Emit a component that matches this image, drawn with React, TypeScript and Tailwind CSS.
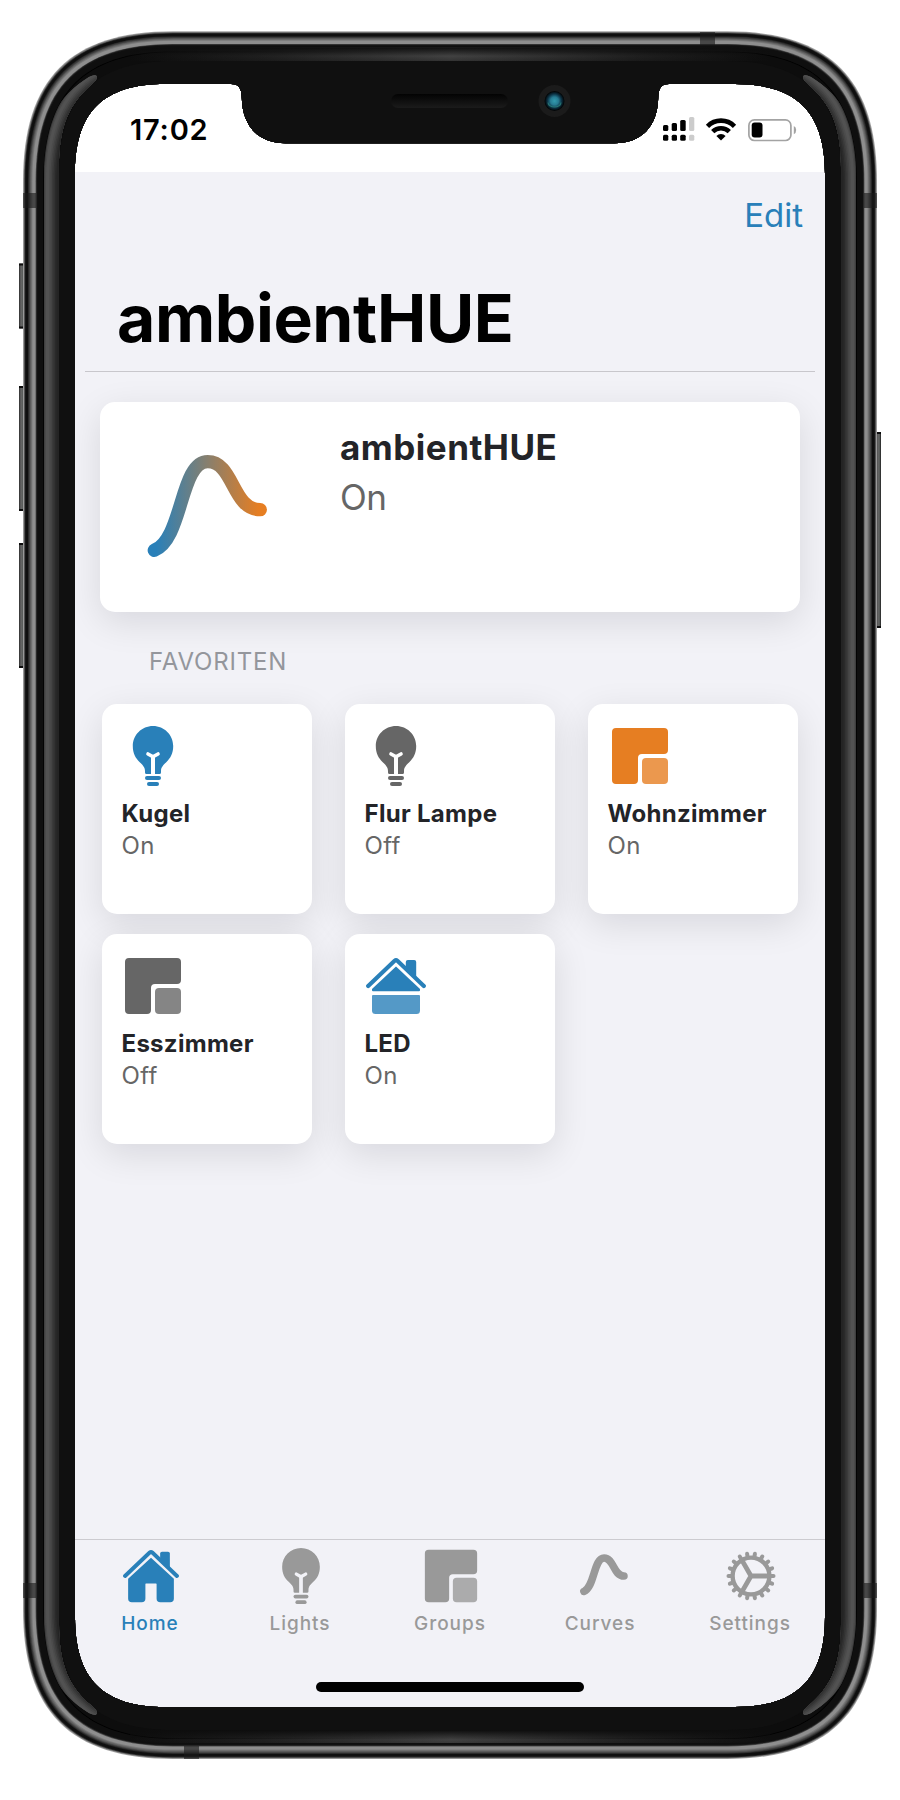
import type { ReactNode } from "react";

function corner(inset: number, l: number, t: number, r: number, b: number, R: number, k: number) {
  const x0 = l + inset, y0 = t + inset, x1 = r - inset, y1 = b - inset;
  const q = R - inset;
  const c = q * (1 - k);
  return `M${x0} ${y0 + q}C${x0} ${y0 + c} ${x0 + c} ${y0} ${x0 + q} ${y0}H${x1 - q}C${x1 - c} ${y0} ${x1} ${y0 + c} ${x1} ${y0 + q}V${y1 - q}C${x1} ${y1 - c} ${x1 - c} ${y1} ${x1 - q} ${y1}H${x0 + q}C${x0 + c} ${y1} ${x0} ${y1 - c} ${x0} ${y1 - q}Z`;
}

const body = (inset: number) => corner(inset, 23, 31.3, 877, 1759, 150, 0.684);

const SCREEN =
  "M75 174C75 112 103 84 165 84H231C239 84 241.5 88 241.8 98C242.5 126 258 143.3 286 143.3H614C642 143.3 657.5 126 658.2 98C658.5 88 661 84 669 84H735C797 84 825 112 825 174V1617C825 1679 797 1707 735 1707H165C103 1707 75 1679 75 1617Z";

const METAL: [number, string][] = [
  [0, "#a4a4a4"], [0.8, "#6e6e6e"], [1.6, "#2a2a2a"], [2.4, "#0f0f0f"], [5, "#262626"],
  [5.8, "#3a3a3a"], [6.6, "#505050"], [7.4, "#636363"], [8.4, "#787878"], [9.4, "#8e8e8e"],
  [12.6, "#4a4a4a"], [13.3, "#1a1a1a"], [14.2, "#0f0f0f"], [20.2, "#000000"],
];

const SHEEN: [number, string][] = [
  [20.6, "#383838"], [21.6, "#4a4a4a"], [23, "#525252"], [26, "#4c4c4c"], [27.5, "#444444"],
  [29, "#3b3b3b"], [30.5, "#323232"], [32, "#2a2a2a"], [33.5, "#242424"], [36, "#101010"],
];

const STRIP = "M44 160C44 122 58 96 89 77Q96 73.500 97 77Q97 80 92 84C69 104 59 126 59 168V1623C59 1665 69 1687 92 1706Q97 1710 97 1713Q96 1716.500 89 1713C58 1694 44 1668 44 1630Z";

const BUTTONS: [number, number, number][] = [
  [19, 263.5, 65], [19, 386, 125], [19, 543, 125], [876, 432, 196],
];

function PhoneFrame() {
  return (
    <svg className="pointer-events-none absolute inset-0" width="900" height="1800" viewBox="0 0 900 1800">
      <defs>
        <clipPath id="frame">
          <path clipRule="evenodd" d={`M0 0H900V1800H0Z${SCREEN}`} />
        </clipPath>
        <clipPath id="inner">
          <path d={body(16)} />
        </clipPath>
        <clipPath id="strip">
          <path d={STRIP} />
          <path d={STRIP} transform="translate(900 0) scale(-1 1)" />
        </clipPath>
        <linearGradient id="glow" x1="0" x2="1">
          <stop offset="0" stopColor="#454545" stopOpacity="0" />
          <stop offset="0.2" stopColor="#454545" stopOpacity="0.35" />
          <stop offset="0.5" stopColor="#484848" />
          <stop offset="0.8" stopColor="#454545" stopOpacity="0.35" />
          <stop offset="1" stopColor="#454545" stopOpacity="0" />
        </linearGradient>
        <linearGradient id="dim" x1="0" x2="0" y1="0" y2="1">
          <stop offset="0" stopColor="#0d0d0d" />
          <stop offset="0.65" stopColor="#0d0d0d" stopOpacity="0.1" />
          <stop offset="1" stopColor="#0d0d0d" stopOpacity="0.35" />
        </linearGradient>
        <linearGradient id="button" x1="0" x2="1">
          <stop offset="0" stopColor="#2b2b2b" />
          <stop offset="0.4" stopColor="#686868" />
          <stop offset="0.7" stopColor="#5a5d5b" />
          <stop offset="1" stopColor="#1f1f1f" />
        </linearGradient>
        <linearGradient id="speaker" x1="0" x2="0" y1="0" y2="1">
          <stop offset="0" stopColor="#030303" />
          <stop offset="1" stopColor="#1b1b1b" />
        </linearGradient>
        <radialGradient id="lens">
          <stop offset="0" stopColor="#329bae" />
          <stop offset="0.4" stopColor="#267b92" />
          <stop offset="0.7" stopColor="#0c3346" />
          <stop offset="0.95" stopColor="#020608" />
        </radialGradient>
      </defs>
      {BUTTONS.map(([x, y, h]) => (
        <g key={y}>
          <rect x={x} y={y} width="5" height={h} rx="1" fill="url(#button)" />
          <path d={`M${x} ${y + 1}h5M${x} ${y + h - 1}h5`} stroke="#0c0c0c" strokeWidth="2" />
        </g>
      ))}
      <g clipPath="url(#frame)">
        {METAL.map(([i, c]) => (
          <path key={i} d={body(i)} fill={c} />
        ))}
        <path d={body(21)} fill="#0d0d0d" />
        <g clipPath="url(#inner)">
          <rect x="130" y="47" width="640" height="14" fill="url(#glow)" />
          <rect x="130" y="47" width="640" height="14" fill="url(#dim)" />
          <rect x="130" y="1730" width="640" height="15" fill="url(#glow)" />
          <rect x="130" y="1730" width="640" height="15" fill="url(#dim)" />
        </g>
        <path d={corner(0, 59, 61, 841, 1730, 114, 0.684)} fill="#101010" />
        <g clipPath="url(#strip)">
          {SHEEN.map(([i, c]) => (
            <path key={i} d={body(i)} fill={c} />
          ))}
        </g>
        <path
          d="M23 193h13v15H23zM864 193h13v15h-13zM23 1583h13v15H23zM864 1583h13v15h-13zM700 32h15v13h-15zM184 1746h15v13h-15z"
          fill="#1c1c1c"
          fillOpacity="0.62"
        />
        <rect x="391" y="94" width="117" height="14" rx="7" fill="url(#speaker)" />
        <circle cx="554.5" cy="101" r="16" fill="#1b1b1b" />
        <circle cx="554.5" cy="101" r="10" fill="url(#lens)" />
        <path d="M548 102.500a6.500 4.500 0 0 0 13 0" fill="none" stroke="#39a58f" strokeOpacity="0.5" strokeWidth="1.200" />
      </g>
    </svg>
  );
}

type IconProps = { className: string };

function Bulb({ className }: IconProps) {
  return (
    <svg className={className} viewBox="0 0 60 60">
      <mask id="filament">
        <rect width="60" height="60" fill="#fff" />
        <path d="M25 28l5 2.800 5-2.800" fill="none" stroke="#000" strokeWidth="3.600" strokeLinecap="round" strokeLinejoin="round" />
        <path d="M30 30V49" stroke="#000" strokeWidth="4" />
      </mask>
      <path
        mask="url(#filament)"
        fill="currentColor"
        d="M30 0C41.300 0 50.200 9 50.200 20C50.200 27.500 47.500 32 43.500 36C40.500 39 38 41 38 45V46.500Q38 48 36.500 48H23.500Q22 48 22 46.500V45C22 41 19.500 39 16.500 36C12.500 32 9.800 27.500 9.800 20C9.800 9 18.700 0 30 0Z"
      />
      <rect x="22" y="50" width="16" height="4" rx="2" fill="currentColor" />
      <rect x="24" y="56" width="12" height="4" rx="2" fill="currentColor" />
    </svg>
  );
}

function Room({ className }: IconProps) {
  return (
    <svg className={className} viewBox="0 0 60 60" fill="currentColor">
      <path d="M6 2H54a4 4 0 0 1 4 4V24a4 4 0 0 1-4 4H32a4 4 0 0 0-4 4V54a4 4 0 0 1-4 4H6a4 4 0 0 1-4-4V6a4 4 0 0 1 4-4Z" />
      <rect x="32" y="32" width="26" height="26" rx="4" fillOpacity="0.8" />
    </svg>
  );
}

function Roof() {
  return (
    <>
      <path d="M2.200 30L28.600 4.800Q30 3.600 31.400 4.800L57.800 30" fill="none" stroke="currentColor" strokeWidth="4.200" strokeLinecap="round" />
      <path d="M39.800 12V6q0-2 2-2h6.400q2 0 2 2V22Z" fill="currentColor" />
    </>
  );
}

function Zone({ className }: IconProps) {
  return (
    <svg className={className} viewBox="0 0 60 60" fill="currentColor">
      <Roof />
      <path d="M30 10.500L54 33V34.200Q54 35.300 53 35.300H7Q6 35.300 6 34.200V33Z" />
      <path d="M7 39H53q1 0 1 1V54.500q0 3.500-3.500 3.500H9.500Q6 58 6 54.500V40q0-1 1-1Z" fillOpacity="0.8" />
    </svg>
  );
}

function House({ className }: IconProps) {
  return (
    <svg className={className} viewBox="0 0 60 60" fill="currentColor">
      <Roof />
      <path d="M30 10.500L54.500 33V54q0 4-4 4H40q-4 0-4-4V38.500q0-.5-.5-.5H24.500q-.5 0-.5.5V54q0 4-4 4H9.500q-4 0-4-4V33Z" />
    </svg>
  );
}

const CURVE = "M154.300 550.300C183 539 180 461.700 207.700 461.700C234 461.700 232 509.700 260.300 509.700";

function CurveIcon({ className }: IconProps) {
  return (
    <svg className={className} viewBox="133.500 435.500 148 148" fill="none">
      <path d={CURVE} stroke="currentColor" strokeWidth="20" strokeLinecap="round" />
    </svg>
  );
}

function Gear({ className }: IconProps) {
  return (
    <svg className={className} viewBox="-28 -28 56 56" fill="none" stroke="currentColor">
      <circle r="18.400" strokeWidth="4.400" />
      {Array.from({ length: 18 }, (_, i) => (
        <path key={i} d="M19 0H22.500" strokeWidth="4" strokeLinecap="round" transform={`rotate(${i * 20})`} />
      ))}
      <path d="M0 0H18M0 0L-9 -15.600M0 0L-9 15.600" strokeWidth="4.800" strokeLinejoin="round" />
    </svg>
  );
}

function Favorite({ icon, name, state }: { icon: ReactNode; name: string; state: string }) {
  return (
    <div className="flex h-[210px] w-[210px] flex-col rounded-[15px] bg-white pl-[19.5px] pt-[22px] shadow-[0_10px_36px_rgba(0,0,20,0.11)]">
      <div className="ml-[1.5px] h-[60px]">{icon}</div>
      <div className="mt-3 h-8 whitespace-nowrap text-[24px] font-bold leading-8 tracking-[0.3px] text-[#232428]">{name}</div>
      <div className="h-8 text-[24px] leading-8 tracking-[0.3px] text-[#666666]">{state}</div>
    </div>
  );
}

function Tab({ icon, label, active }: { icon: ReactNode; label: string; active?: boolean }) {
  return (
    <div className={active ? "flex flex-1 flex-col items-center text-[#2980b9]" : "flex flex-1 flex-col items-center text-[#999999]"}>
      <div className="ml-0.5 h-14">{icon}</div>
      <div className="mt-2 text-[19px] font-medium leading-6 tracking-[0.95px]">{label}</div>
    </div>
  );
}

export default function App() {
  return (
    <div className="relative h-[1800px] w-[900px] overflow-hidden bg-white pl-[75px] pt-[84px] font-['Inter','Liberation_Sans',sans-serif]">
      <div className="flex h-[1623px] w-[750px] flex-col bg-[#f2f2f7]">
        <header className="flex h-[88px] items-start justify-between bg-white pl-[55px] pr-[28px]">
          <div className="mt-7 text-[29px] font-semibold leading-[36px] tracking-[0.8px] text-black">17:02</div>
          <div className="mt-[31px] flex">
            <svg width="136" height="28" viewBox="661 115 136 28">
              <g fill="#000">
                <rect x="663" y="125" width="5.300" height="6" rx="1.500" />
                <rect x="671.700" y="123" width="5.300" height="8" rx="1.500" />
                <rect x="680.200" y="120" width="5.500" height="11" rx="1.500" />
                <rect x="663" y="134.700" width="5.300" height="6" rx="1.500" />
                <rect x="671.700" y="134.700" width="5.300" height="6" rx="1.500" />
                <rect x="680.200" y="134.700" width="5.500" height="6" rx="1.500" />
              </g>
              <g fill="#cccccc">
                <rect x="689" y="117" width="5.300" height="14" rx="1.500" />
                <rect x="689" y="134.700" width="5.300" height="6" rx="1.500" />
              </g>
              <path d="M707.500 126.300A19 19 0 0 1 734.500 126.300" fill="none" stroke="#000" strokeWidth="4.600" />
              <path d="M712.700 131.600A11.800 11.800 0 0 1 729.300 131.600" fill="none" stroke="#000" strokeWidth="4.600" />
              <path d="M716.400 136A6.500 6.500 0 0 1 725.600 136L721 140.600Z" fill="#000" />
              <rect x="748.900" y="119.900" width="42" height="20.600" rx="5.500" fill="none" stroke="#a3a3a3" strokeWidth="1.700" />
              <rect x="751.700" y="122.400" width="10.800" height="15" rx="3" fill="#000" />
              <path d="M793.800 126Q796.200 127 796.200 130T793.800 134.200Z" fill="#a3a3a3" />
            </svg>
          </div>
        </header>

        <div className="mt-[23px] flex justify-end pr-[22px]">
          <span className="text-[33px] leading-10 text-[#2980b9]">Edit</span>
        </div>
        <h1 className="mx-[10px] h-[137px] border-b border-[#c8c7cc] pl-8 pt-[43px] text-[66px] font-bold leading-[80px] tracking-[-0.4px] text-black">ambientHUE</h1>

        <section className="mx-[25px] mt-[30px] flex h-[210px] rounded-[15px] bg-white shadow-[0_10px_36px_rgba(0,0,20,0.11)]">
          <svg className="ml-[38px] mt-8 h-[148px] w-[148px]" viewBox="138 434 148 148" fill="none">
            <defs>
              <linearGradient id="ambient" gradientUnits="userSpaceOnUse" x1="156" y1="506" x2="259" y2="506">
                <stop offset="0" stopColor="#2980b9" />
                <stop offset="1" stopColor="#e67e22" />
              </linearGradient>
            </defs>
            <path d={CURVE} stroke="url(#ambient)" strokeWidth="13.300" strokeLinecap="round" />
          </svg>
          <div className="ml-[54px] mt-[21px]">
            <div className="text-[35px] font-bold leading-[48px] tracking-[0.5px] text-[#232428]">ambientHUE</div>
            <div className="mt-0.5 text-[35px] leading-[48px] tracking-[-0.5px] text-[#666666]">On</div>
          </div>
        </section>

        <h2 className="ml-[74px] mt-[33px] h-[34px] text-[24px] font-normal leading-[34px] tracking-[0.8px] text-[#94969c]">FAVORITEN</h2>

        <section className="ml-[27px] mt-[25px] grid w-[696px] grid-cols-3 gap-x-[33px] gap-y-5">
          <Favorite icon={<Bulb className="h-[60px] w-[60px] text-[#2980b9]" />} name="Kugel" state="On" />
          <Favorite icon={<Bulb className="h-[60px] w-[60px] text-[#666666]" />} name="Flur Lampe" state="Off" />
          <Favorite icon={<Room className="ml-px h-[60px] w-[60px] text-[#e67e22]" />} name="Wohnzimmer" state="On" />
          <Favorite icon={<Room className="h-[60px] w-[60px] text-[#666666]" />} name="Esszimmer" state="Off" />
          <Favorite icon={<Zone className="h-[60px] w-[60px] text-[#2980b9]" />} name="LED" state="On" />
        </section>

        <footer className="mt-auto flex h-[168px] flex-col items-center border-t border-[#cccbd0] pt-2">
          <nav className="flex w-full">
            <Tab active icon={<House className="h-14 w-14" />} label="Home" />
            <Tab icon={<Bulb className="h-14 w-14" />} label="Lights" />
            <Tab icon={<Room className="h-14 w-14" />} label="Groups" />
            <Tab icon={<CurveIcon className="ml-1.5 h-14 w-14" />} label="Curves" />
            <Tab icon={<Gear className="h-14 w-14" />} label="Settings" />
          </nav>
          <div className="mt-auto mb-[15px] h-[10px] w-[268px] rounded-full bg-black" />
        </footer>
      </div>
      <PhoneFrame />
    </div>
  );
}
